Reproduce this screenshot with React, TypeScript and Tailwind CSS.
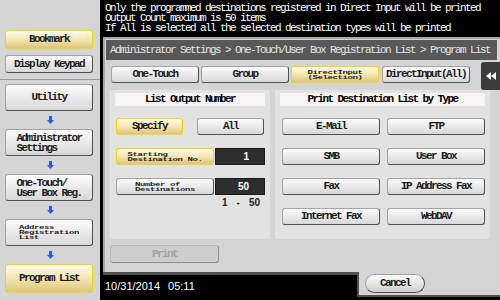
import React from "react";

const base =
  "flex items-center justify-center rounded-[3px] border border-[#a4a4a4] border-r-[#505050] border-b-[#505050] bg-gradient-to-b from-[#fcfcfc] to-[#d8d8d8] text-[#1c1c1c]";
const yellow =
  "flex items-center justify-center rounded-[3px] border-[1.5px] border-[#f2d400] bg-gradient-to-b from-[#fffbea] via-[#f3e6b4] to-[#dcc67c] text-[#1c1c1c]";
const small = "text-[9px] leading-[8px] tracking-[-0.4px] scale-y-[0.62]";

function Arrow() {
  return (
    <div className="h-[18px] w-full flex items-center justify-center">
      <svg width="7" height="8" viewBox="0 0 7 8">
        <path d="M2 0h3v4h2L3.5 8 0 4h2z" fill="#1d5cf5" />
      </svg>
    </div>
  );
}

export default function App() {
  return (
    <div className="w-[500px] h-[300px] bg-black flex overflow-hidden font-['Liberation_Mono',monospace] font-bold text-[11px] tracking-[-1.6px]">
      {/* Sidebar */}
      <div className="w-[100px] h-full bg-[#d5d5d5] flex flex-col">
        <div className="px-[5px] pt-[30px] flex flex-col">
          <div className={`${yellow} w-[88px] h-[19px]`}>Bookmark</div>
          <div className={`${base} w-[88px] h-[18px] mt-[6px]`}>Display Keypad</div>
        </div>
        <div className="mt-[6px] h-px w-full bg-[#9a9a9a]" />
        <div className="px-[5px] pt-[4px] flex flex-col">
          <div className={`${base} w-[88px] h-[27px]`}>Utility</div>
          <Arrow />
          <div className={`${base} w-[88px] h-[27px]`}>
            <div className="text-left leading-[10px]">
              Administrator
              <br />
              Settings
            </div>
          </div>
          <Arrow />
          <div className={`${base} w-[88px] h-[27px]`}>
            <div className="text-left leading-[10px]">
              One-Touch/
              <br />
              User Box Reg.
            </div>
          </div>
          <Arrow />
          <div className={`${base} w-[88px] h-[27px]`}>
            <div className={`text-left ${small}`}>
              Address
              <br />
              Registration
              <br />
              List
            </div>
          </div>
          <Arrow />
          <div className={`${yellow} w-[88px] h-[29px]`}>Program List</div>
        </div>
      </div>

      {/* Main column */}
      <div className="flex-1 ml-[3px] flex flex-col">
        <div className="h-[37px] pl-[2px] pt-[3px] text-white font-normal leading-[10px] whitespace-nowrap">
          <div>Only the programmed destinations registered in Direct Input will be printed</div>
          <div>Output Count maximum is 50 items</div>
          <div>If All is selected all the selected destination types will be printed</div>
        </div>

        <div className="relative h-[235px] bg-[#d4d4d4] shadow-[inset_2px_2px_0_#a9a9a9] flex flex-col">
          <div className="mt-[3px] mx-[3px] h-[20px] bg-[#585858] text-[#e4e4e4] flex items-center pl-[4px] whitespace-nowrap font-normal">
            Administrator Settings &gt; One-Touch/User Box Registration List &gt; Program List
          </div>

          <div className="mt-[6px] h-[17px] pl-[8px] flex">
            <div className={`${base} w-[88px] h-[17px]`}>One-Touch</div>
            <div className={`${base} w-[88px] h-[17px] ml-[2px]`}>Group</div>
            <div className={`${yellow} w-[88px] h-[17px] ml-[2px]`}>
              <div className={`text-center ${small}`}>
                DirectInput
                <br />
                (Selection)
              </div>
            </div>
            <div className={`${base} w-[88px] h-[17px] ml-[3px]`}>DirectInput(All)</div>
          </div>

          <div className="absolute right-0 top-[25px] w-[19px] h-[28px] bg-[#3c3c3c] rounded-l-[3px] flex items-center justify-center">
            <svg width="10" height="8" viewBox="0 0 10 8">
              <path d="M5 0v8L0 4zM10 0v8L5 4z" fill="#f2f2f2" />
            </svg>
          </div>

          <div className="mt-[7px] pl-[7px] flex h-[149px]">
            {/* Left panel */}
            <div className="w-[160px] h-full bg-[#e2e2e2] rounded-[2px] flex flex-col">
              <div className="mt-[3px] mx-[5px] h-[13px] bg-[#f8f4f8] flex items-center justify-center">
                List Output Number
              </div>
              <div className="mt-[12px] pl-[6px] flex">
                <div className={`${yellow} w-[67px] h-[17px]`}>Specify</div>
                <div className={`${base} w-[67px] h-[17px] ml-[14px]`}>All</div>
              </div>
              <div className="mt-[13px] pl-[6px] flex">
                <div className={`${yellow} w-[98px] h-[17px]`}>
                  <div className={`text-left ${small}`}>
                    Starting
                    <br />
                    Destination No.
                  </div>
                </div>
                <div className="w-[50px] h-[17px] ml-[1px] bg-[#2e2e2e] border border-[#1a1a1a] flex items-center justify-end pr-[15px] text-white font-['Liberation_Sans',sans-serif] font-bold text-[10px] tracking-normal">
                  1
                </div>
              </div>
              <div className="mt-[13px] pl-[6px] flex">
                <div className={`${base} w-[98px] h-[17px]`}>
                  <div className={`text-left ${small}`}>
                    Number of
                    <br />
                    Destinations
                  </div>
                </div>
                <div className="w-[50px] h-[17px] ml-[1px] bg-[#2e2e2e] border border-[#1a1a1a] flex items-center justify-end pr-[15px] text-white font-['Liberation_Sans',sans-serif] font-bold text-[10px] tracking-normal">
                  50
                </div>
              </div>
              <div className="mt-[2px] pl-[112px] flex text-[#1c1c1c] font-['Liberation_Sans',sans-serif] font-bold text-[10px] tracking-normal leading-[11px]">
                <span>1</span>
                <span className="ml-[9px]">-</span>
                <span className="ml-[9px]">50</span>
              </div>
            </div>

            {/* Right panel */}
            <div className="w-[215px] h-full ml-[5px] bg-[#e2e2e2] rounded-[2px] flex flex-col">
              <div className="mt-[3px] mx-[5px] h-[13px] bg-[#f8f4f8] flex items-center justify-center">
                Print Destination List by Type
              </div>
              <div className="mt-[12px] pl-[7px] grid grid-cols-[98px_98px] gap-x-[7px] gap-y-[13px]">
                <div className={`${base} h-[17px]`}>E-Mail</div>
                <div className={`${base} h-[17px]`}>FTP</div>
                <div className={`${base} h-[17px]`}>SMB</div>
                <div className={`${base} h-[17px]`}>User Box</div>
                <div className={`${base} h-[17px]`}>Fax</div>
                <div className={`${base} h-[17px]`}>IP Address Fax</div>
                <div className={`${base} h-[17px]`}>Internet Fax</div>
                <div className={`${base} h-[17px]`}>WebDAV</div>
              </div>
            </div>
          </div>

          <div className="mt-[6px] ml-[7px] w-[109px] h-[18px] rounded-[3px] border border-[#b8b8b8] border-r-[#8e8e8e] border-b-[#8e8e8e] bg-[#cecece] text-[#a2a2a2] flex items-center justify-center">
            Print
          </div>
        </div>

        {/* Bottom row */}
        <div className="h-[28px] flex">
          <div className="flex-1 border-t-[3px] border-[#505050] pl-[2px] pt-[5px] text-white font-['Liberation_Sans',sans-serif] font-normal tracking-normal leading-[12px]">
            <span>10/31/2014</span>
            <span className="ml-[8px]">05:11</span>
          </div>
          <div className="w-[143px] h-[25px] bg-[#d4d4d4] border-l-[2px] border-b-[2px] border-[#505050] pl-[6px] pt-[2px]">
            <div className="w-[60px] h-[19px] rounded-full border border-[#a4a4a4] border-r-[#505050] border-b-[#505050] bg-gradient-to-b from-[#fcfcfc] to-[#d0d0d0] text-[#1c1c1c] flex items-center justify-center">
              Cancel
            </div>
          </div>
        </div>
      </div>
    </div>
  );
}
